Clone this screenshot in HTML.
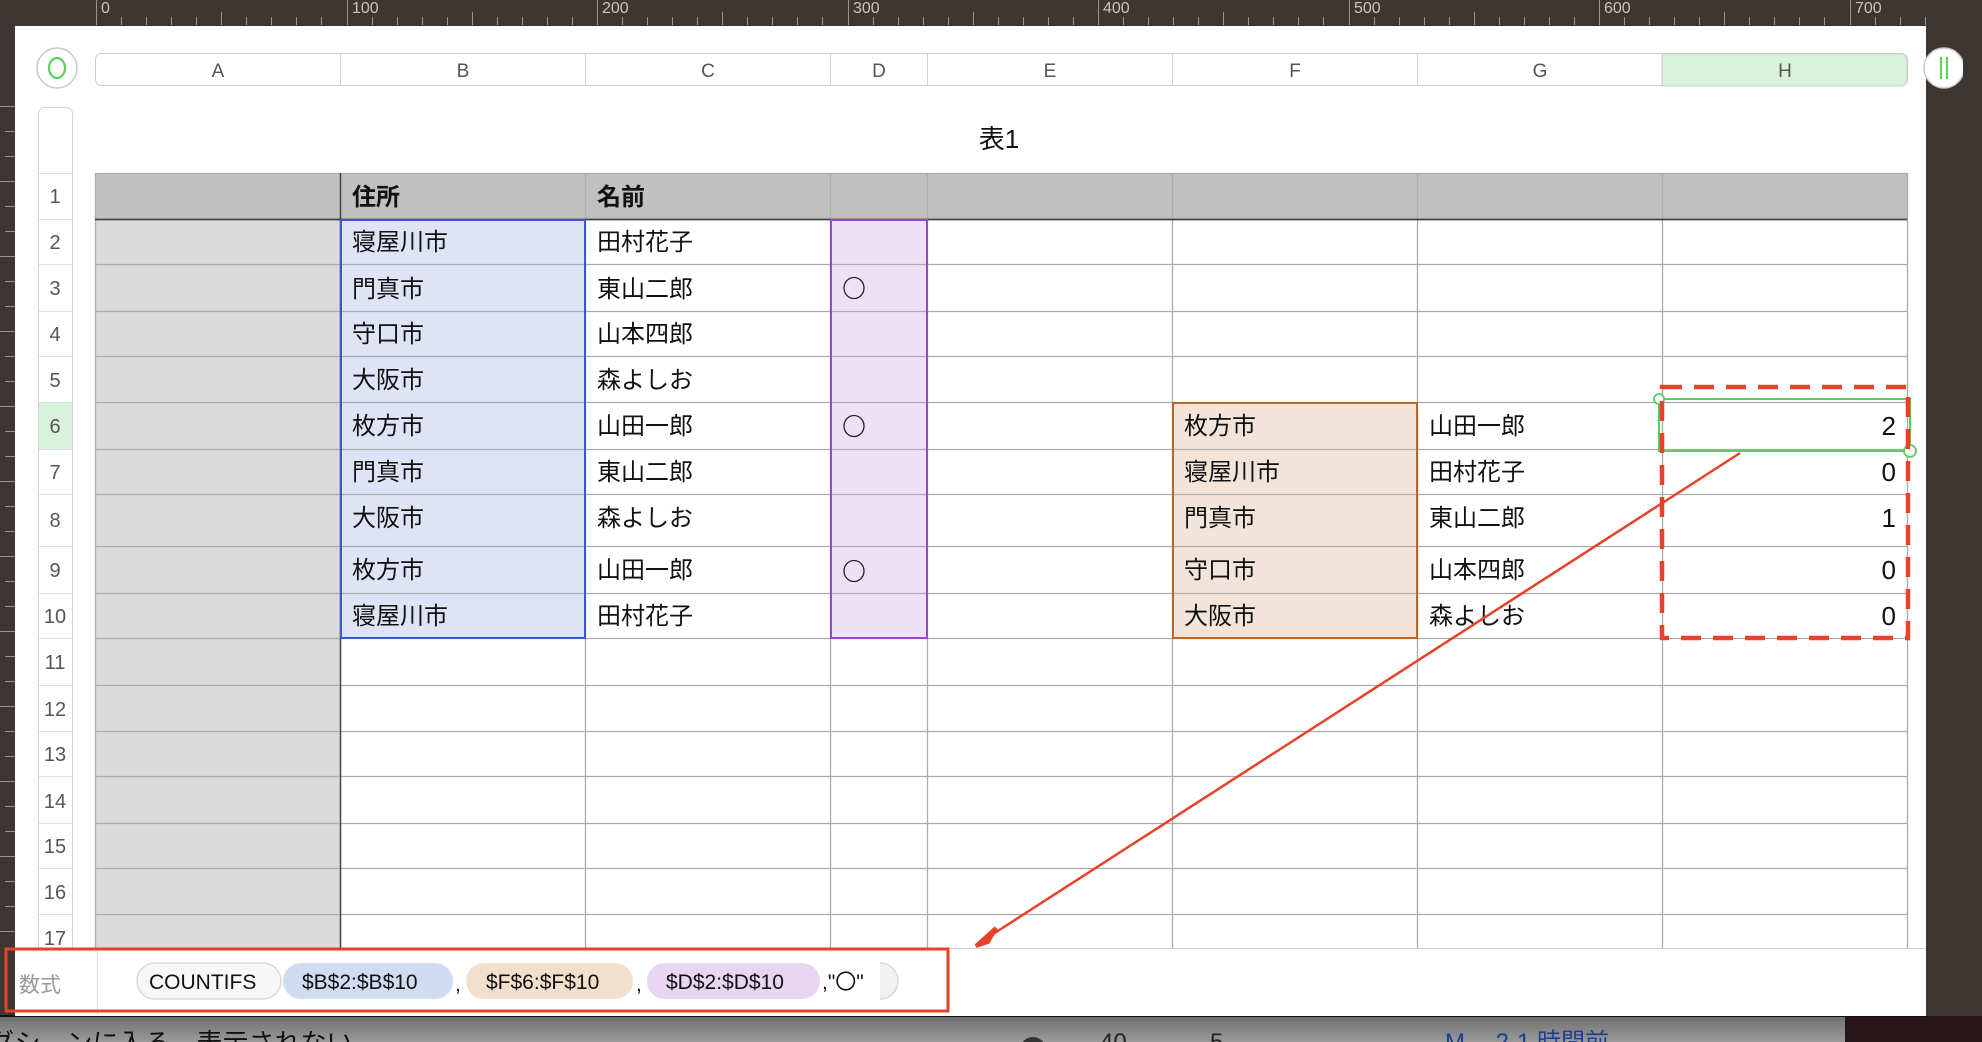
<!DOCTYPE html>
<html><head><meta charset="utf-8"><style>
html,body{margin:0;padding:0;width:1982px;height:1042px;overflow:hidden;background:#3d3633}
svg{display:block}
text{font-family:"Liberation Sans","Noto Sans CJK JP",sans-serif}
</style></head><body>
<svg width="1982" height="1042" viewBox="0 0 1982 1042" xmlns="http://www.w3.org/2000/svg">
<defs>
<linearGradient id="bg" x1="0" y1="0" x2="0" y2="1"><stop offset="0" stop-color="#6f6f6f"/><stop offset="1" stop-color="#9a9a9a"/></linearGradient>
</defs>
<rect x="0" y="0" width="1982" height="1042" fill="#3d3633"/>
<!-- ruler top -->
<g fill="#c9c4c0" font-size="16">
<text x="101" y="13">0</text><text x="352" y="13">100</text><text x="602" y="13">200</text><text x="853" y="13">300</text><text x="1103" y="13">400</text><text x="1354" y="13">500</text><text x="1604" y="13">600</text><text x="1855" y="13">700</text>
</g>
<g stroke="#9a938f" stroke-width="1">
<path d="M96.5 0V25M347.5 0V25M597.5 0V25M848.5 0V25M1098.5 0V25M1349.5 0V25M1599.5 0V25M1850.5 0V25"/>
<path d="M121.5 17V25M146.5 17V25M171.5 17V25M196.5 17V25M221.5 12V25M246.5 17V25M271.5 17V25M296.5 17V25M321.5 17V25M372.5 17V25M397.5 17V25M422.5 17V25M447.5 17V25M472.5 12V25M497.5 17V25M522.5 17V25M547.5 17V25M572.5 17V25M622.5 17V25M647.5 17V25M672.5 17V25M697.5 17V25M722.5 12V25M747.5 17V25M772.5 17V25M797.5 17V25M822.5 17V25M873.5 17V25M898.5 17V25M923.5 17V25M948.5 17V25M973.5 12V25M998.5 17V25M1023.5 17V25M1048.5 17V25M1073.5 17V25M1123.5 17V25M1148.5 17V25M1173.5 17V25M1198.5 17V25M1223.5 12V25M1248.5 17V25M1273.5 17V25M1298.5 17V25M1323.5 17V25M1374.5 17V25M1399.5 17V25M1424.5 17V25M1449.5 17V25M1474.5 12V25M1499.5 17V25M1524.5 17V25M1549.5 17V25M1574.5 17V25M1624.5 17V25M1649.5 17V25M1674.5 17V25M1699.5 17V25M1724.5 12V25M1749.5 17V25M1774.5 17V25M1799.5 17V25M1824.5 17V25M1875.5 17V25M1900.5 17V25M1925.5 17V25"/>
<path d="M0 106.5H15M5 131.5H15M5 156.5H15M0 181.5H15M5 206.5H15M5 231.5H15M0 256.5H15M5 281.5H15M5 306.5H15M0 331.5H15M5 356.5H15M5 381.5H15M0 406.5H15M5 431.5H15M5 456.5H15M0 481.5H15M5 506.5H15M5 531.5H15M0 556.5H15M5 581.5H15M5 606.5H15M0 631.5H15M5 656.5H15M5 681.5H15M0 706.5H15M5 731.5H15M5 756.5H15M0 781.5H15M5 806.5H15M5 831.5H15M0 856.5H15M5 881.5H15M5 906.5H15M0 931.5H15"/>
</g>
<!-- white sheet -->
<rect x="15" y="26" width="1911" height="990" fill="#ffffff"/>
<!-- bottom area -->
<rect x="0" y="1016" width="1845" height="26" fill="url(#bg)"/>
<rect x="1845" y="1016" width="137" height="26" fill="#2a1518"/>
<line x1="0" y1="1016" x2="1928" y2="1016" stroke="#111" stroke-width="2"/>
<text x="-12" y="1052" font-size="26" fill="#111">ダシ…ンに入る　表示されない</text>
<circle cx="1033" cy="1050" r="13" fill="#333"/>
<text x="1100" y="1050" font-size="24" fill="#222">40</text><text x="1210" y="1050" font-size="24" fill="#222">5</text>
<text x="1445" y="1050" font-size="24" fill="#1d3f8f">M　 2-1 時間前</text>
<!-- circle buttons -->
<ellipse cx="57" cy="68" rx="20" ry="20" fill="#fff" stroke="#c8c8c8" stroke-width="1.5"/>
<ellipse cx="57" cy="68" rx="8" ry="10" fill="none" stroke="#5bd05a" stroke-width="2.2"/>
<rect x="1926" y="26" width="56" height="990" fill="#3d3633"/>
<ellipse cx="1944" cy="68" rx="20" ry="20" fill="#fff" stroke="#c8c8c8" stroke-width="1.5"/>
<path d="M1941 57V79M1947 57V79" stroke="#5bd05a" stroke-width="2.2"/>
<rect x="1963" y="26" width="19" height="990" fill="#3d3633"/>
<!-- column header bar -->
<rect x="95.5" y="53.5" width="1812" height="32" rx="6" fill="#fff" stroke="#cdcdcd"/>
<path d="M1662 54H1901a6 6 0 0 1 6 6V80a6 6 0 0 1-6 6H1662Z" fill="#d9f3da" stroke="#cdcdcd"/>
<g stroke="#d4d4d4"><path d="M340.5 54V86M585.5 54V86M830.5 54V86M927.5 54V86M1172.5 54V86M1417.5 54V86M1662.5 54V86"/></g>
<g font-size="19" fill="#555" text-anchor="middle">
<text x="218" y="77">A</text><text x="463" y="77">B</text><text x="708" y="77">C</text><text x="879" y="77">D</text><text x="1050" y="77">E</text><text x="1295" y="77">F</text><text x="1540" y="77">G</text><text x="1785" y="77">H</text>
</g>
<!-- row number column -->
<rect x="38.5" y="107.5" width="34" height="880" rx="6" fill="#fff" stroke="#d4d4d4"/>
<rect x="39" y="402" width="33" height="47" fill="#d9f3da"/>
<g stroke="#e0e0e0"><path d="M39 173.5H72M39 219.5H72M39 264.5H72M39 311.5H72M39 356.5H72M39 402.5H72M39 449.5H72M39 494.5H72M39 546.5H72M39 593.5H72M39 638.5H72M39 685.5H72M39 731.5H72M39 776.5H72M39 823.5H72M39 868.5H72M39 914.5H72"/></g>
<g font-size="20" fill="#555" text-anchor="middle">
<text x="55" y="203">1</text><text x="55" y="249">2</text><text x="55" y="295">3</text><text x="55" y="341">4</text><text x="55" y="387">5</text><text x="55" y="433">6</text><text x="55" y="479">7</text><text x="55" y="527">8</text><text x="55" y="577">9</text><text x="55" y="623">10</text><text x="55" y="669">11</text><text x="55" y="716">12</text><text x="55" y="761">13</text><text x="55" y="808">14</text><text x="55" y="853">15</text><text x="55" y="899">16</text><text x="55" y="945">17</text>
</g>
<!-- title -->
<text x="999" y="148" font-size="26" fill="#111" text-anchor="middle">表1</text>
<!-- table fills -->
<rect x="95" y="173" width="1812" height="46" fill="#bfc0bf"/>
<rect x="95" y="219" width="245" height="729" fill="#dadada"/>
<rect x="340" y="219" width="245" height="419" fill="#dfe3f6"/>
<rect x="830" y="219" width="97" height="419" fill="#eee0f5"/>
<rect x="1172" y="402" width="245" height="236" fill="#f3e4da"/>
<!-- grid -->
<g stroke="#ababab" stroke-width="1.3">
<path d="M95 264.5H1907M95 311.5H1907M95 356.5H1907M95 402.5H1907M95 449.5H1907M95 494.5H1907M95 546.5H1907M95 593.5H1907M95 638.5H1907M95 685.5H1907M95 731.5H1907M95 776.5H1907M95 823.5H1907M95 868.5H1907M95 914.5H1907"/>
<path d="M95.5 173V948M585.5 173V948M830.5 173V948M927.5 173V948M1172.5 173V948M1417.5 173V948M1662.5 173V948M1907.5 173V948"/>
<path d="M95 173.5H1907"/>
</g>
<path d="M340.5 173V948" stroke="#444" stroke-width="1.5"/>
<path d="M95 219.5H1907" stroke="#444" stroke-width="1.8"/>
<rect x="341" y="220" width="244" height="418" fill="none" stroke="#3657d6" stroke-width="2"/>
<rect x="831" y="220" width="96" height="418" fill="none" stroke="#9d45cc" stroke-width="2"/>
<rect x="1173" y="403" width="244" height="235" fill="none" stroke="#b8672a" stroke-width="2"/>
<!-- text -->
<g font-size="24" fill="#111">
<text x="352" y="205" font-weight="bold">住所</text><text x="597" y="205" font-weight="bold">名前</text>
<text x="352" y="250">寝屋川市</text><text x="597" y="250">田村花子</text>
<text x="352" y="297">門真市</text><text x="597" y="297">東山二郎</text>
<text x="352" y="342">守口市</text><text x="597" y="342">山本四郎</text>
<text x="352" y="388">大阪市</text><text x="597" y="388">森よしお</text>
<text x="352" y="434">枚方市</text><text x="597" y="434">山田一郎</text>
<text x="352" y="480">門真市</text><text x="597" y="480">東山二郎</text>
<text x="352" y="526">大阪市</text><text x="597" y="526">森よしお</text>
<text x="352" y="578">枚方市</text><text x="597" y="578">山田一郎</text>
<text x="352" y="624">寝屋川市</text><text x="597" y="624">田村花子</text>
<text x="1184" y="434">枚方市</text><text x="1429" y="434">山田一郎</text>
<text x="1184" y="480">寝屋川市</text><text x="1429" y="480">田村花子</text>
<text x="1184" y="526">門真市</text><text x="1429" y="526">東山二郎</text>
<text x="1184" y="578">守口市</text><text x="1429" y="578">山本四郎</text>
<text x="1184" y="624">大阪市</text><text x="1429" y="624">森よしお</text>
</g>
<g fill="none" stroke="#222" stroke-width="1.3">
<ellipse cx="854" cy="288" rx="10" ry="10.5"/><ellipse cx="854" cy="426" rx="10" ry="10.5"/><ellipse cx="854" cy="571" rx="10" ry="10.5"/>
</g>
<g font-size="26" fill="#111" text-anchor="end">
<text x="1896" y="435">2</text><text x="1896" y="481">0</text><text x="1896" y="527">1</text><text x="1896" y="579">0</text><text x="1896" y="625">0</text>
</g>
<!-- selection -->
<rect x="1659" y="399" width="251" height="52" fill="none" stroke="#5ccf5a" stroke-width="2"/>
<circle cx="1659" cy="399" r="5" fill="#fff" stroke="#5ccf5a" stroke-width="1.8"/>
<circle cx="1910" cy="451" r="6" fill="#fff" stroke="#5ccf5a" stroke-width="1.8"/>
<rect x="1662" y="387" width="246" height="251" fill="none" stroke="#e8412a" stroke-width="4.5" stroke-dasharray="20 12"/>
<!-- arrow -->
<line x1="1740" y1="453" x2="990" y2="936" stroke="#e8412a" stroke-width="2.5"/>
<path d="M976 946 L996 928 L988 942 Z" fill="#e8412a" stroke="#e8412a" stroke-width="4"/>
<!-- formula bar -->
<rect x="15" y="948" width="1911" height="68" fill="#fff"/>
<line x1="15" y1="948.5" x2="1926" y2="948.5" stroke="#d0d0d0"/>
<line x1="97.5" y1="950" x2="97.5" y2="1014" stroke="#e0e0e0"/>
<text x="19" y="992" font-size="21" fill="#999">数式</text>
<rect x="137" y="963" width="144" height="36" rx="18" fill="#f7f7f7" stroke="#d8d8d8" stroke-width="1.5"/>
<path d="M880 963a18 18 0 0 1 0 36" fill="#f2f2f2" stroke="#d8d8d8" stroke-width="1.5"/>
<rect x="283" y="963" width="170" height="36" rx="18" fill="#d0dcf2"/>
<rect x="466" y="963" width="167" height="36" rx="18" fill="#f3e0cc"/>
<rect x="647" y="963" width="173" height="36" rx="18" fill="#e7d5f2"/>
<g font-size="21" fill="#111">
<text x="149" y="989">COUNTIFS</text>
<text x="302" y="989">$B$2:$B$10</text>
<text x="455" y="991">,</text>
<text x="486" y="989">$F$6:$F$10</text>
<text x="636" y="991">,</text>
<text x="666" y="989">$D$2:$D$10</text>
<text x="822" y="989">,"〇"</text>
</g>
<rect x="6" y="949" width="942" height="62" fill="none" stroke="#e8412a" stroke-width="3"/>
</svg>
</body></html>
